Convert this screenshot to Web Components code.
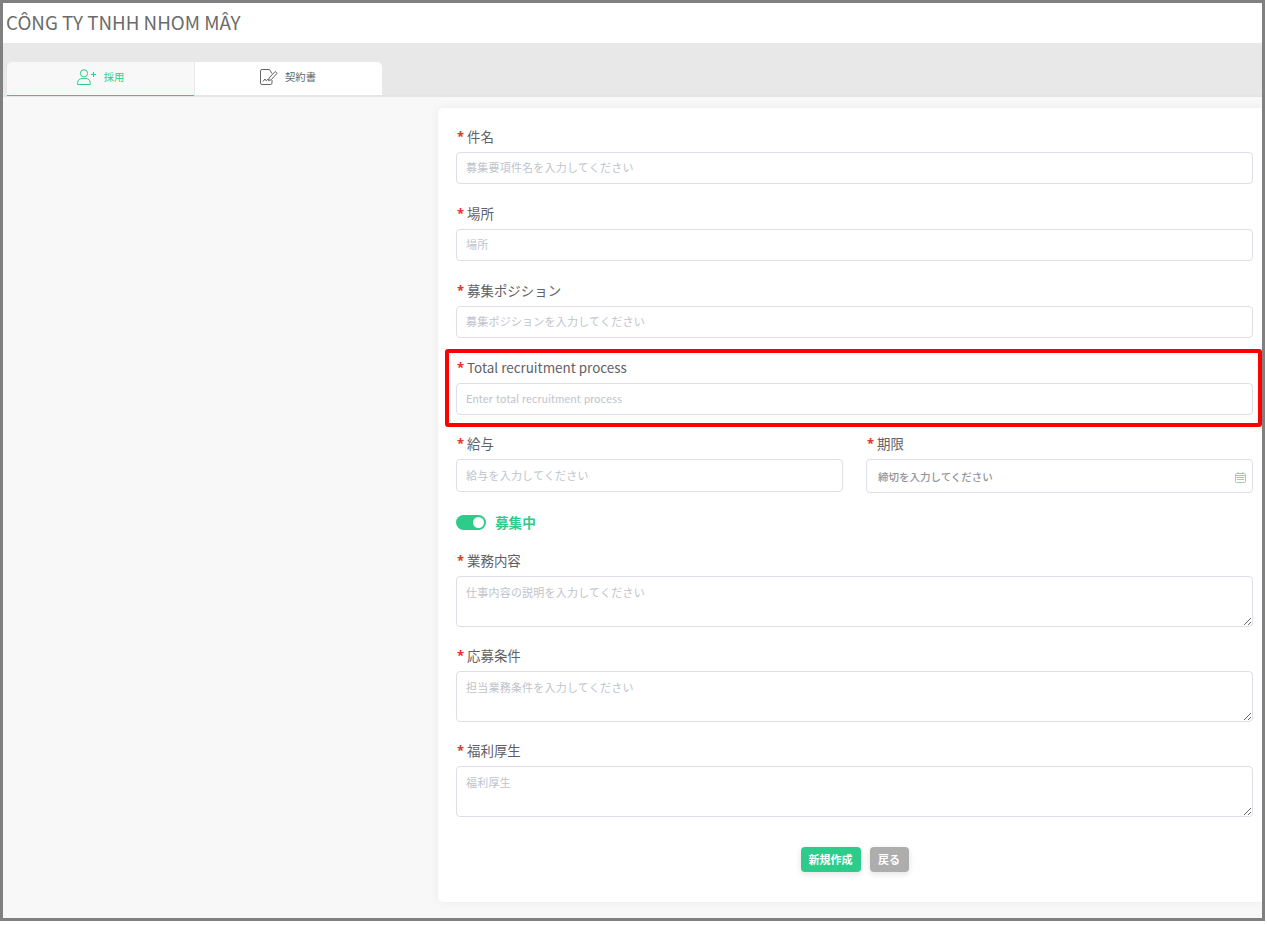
<!doctype html>
<html lang="ja"><head><meta charset="utf-8"><title>採用</title>
<style>
html,body{margin:0;padding:0;background:#fff}
body{font-family:"Noto Sans CJK JP","Noto Sans",sans-serif;color:#606266}
</style></head><body>
<app-shell>
  <app-header slot="header">CÔNG TY TNHH NHOM MÂY</app-header>
  <tab-bar slot="tabs">
    <tab-item active icon="add">採用</tab-item>
    <tab-item icon="sign">契約書</tab-item>
  </tab-bar>
  <form-card slot="main">
    <form-field label="件名" placeholder="募集要項件名を入力してください"></form-field>
    <form-field label="場所" placeholder="場所"></form-field>
    <form-field label="募集ポジション" placeholder="募集ポジションを入力してください"></form-field>
    <form-field label="Total recruitment process" placeholder="Enter total recruitment process" highlight></form-field>
    <field-row>
      <form-field label="給与" placeholder="給与を入力してください" type="tall"></form-field>
      <form-field label="期限" placeholder="締切を入力してください" type="date"></form-field>
    </field-row>
    <toggle-switch>募集中</toggle-switch>
    <form-field label="業務内容" placeholder="仕事内容の説明を入力してください" type="area"></form-field>
    <form-field label="応募条件" placeholder="担当業務条件を入力してください" type="area"></form-field>
    <form-field label="福利厚生" placeholder="福利厚生" type="area"></form-field>
    <form-actions>
      <action-button>新規作成</action-button>
      <action-button kind="back">戻る</action-button>
    </form-actions>
  </form-card>
</app-shell>
<script>
function def(name, css, html){
  customElements.define(name, class extends HTMLElement{
    constructor(){super();const r=this.attachShadow({mode:'open'});
      r.innerHTML='<style>'+css+'</style>'+(typeof html==='function'?html(this):html);}
  });
}
def('app-shell',`
:host{display:block;width:1265px;height:921px;box-sizing:border-box;border:3px solid #808080;background:#f8f8f8;overflow:hidden}
.w{display:flex;flex-direction:column;height:100%}
main{flex:1;display:flex;justify-content:flex-end;padding-top:11px;min-height:0}
`,`<div class="w"><slot name="header"></slot><slot name="tabs"></slot><main><slot name="main"></slot></main></div>`);
def('app-header',`
:host{display:block;height:40px;box-sizing:border-box;background:#fff;padding:6px 0 0 3px;font:400 18.8px/26px "Noto Sans CJK JP","Noto Sans",sans-serif;color:#6b6b6b;white-space:nowrap}
`,`<slot></slot>`);
def('tab-bar',`
:host{display:block;height:54px;box-sizing:border-box;background:#e8e8e9;padding-top:19px}
.w{height:35px;box-sizing:border-box;border-bottom:2px solid #e4e4ea;padding-left:4px}
.l{display:flex;align-items:flex-start;gap:1px;width:375px;height:34px;border-radius:5px 5px 0 0;overflow:hidden}
`,`<div class="w"><div class="l"><slot></slot></div></div>`);
const icons={
 add:`<svg width="19" height="16" viewBox="0 0 19 16" fill="none" stroke="currentColor" stroke-width="1"><circle cx="7" cy="4.300" r="3.600"/><path d="M.6 15.500v-1.800C.6 11 2.800 9.600 5 9.600h4c2.200 0 4.200 1.400 4.200 4.100v1.800z"/><path d="M14 5.500h5M16.500 3v5"/></svg>`,
 sign:`<svg width="18" height="16" viewBox="0 0 18 16" fill="none" stroke="currentColor" stroke-width="1"><path d="M9.500 .5H2A1.500 1.500 0 0 0 .5 2v12A1.500 1.500 0 0 0 2 15.500h8.500a1.500 1.500 0 0 0 1.500-1.500v-3"/><path d="M9.500 .5L12 4.500"/><path d="M3 12.500l2-2.500 1.200 1.800 1.600-1.600 1 1.300"/><path d="M8.500 11.500l.6-2.500 6-6.500 2 1.800-6 6.500z"/></svg>`
};
def('tab-item',`
:host{display:flex;width:187px;height:33px;box-sizing:border-box;align-items:center;justify-content:center;gap:7px;background:#fff;color:#666;font:400 10.3px/1 "Noto Sans CJK JP",sans-serif;padding:0 1px 3px 0}
:host([active]){height:34px;gap:8px;padding:0 0 3px;background:#f8f8f8;color:#2ecc8a;border-bottom:1px solid #3cc48a}
.i{display:flex}
`,h=>`<span class="i">${icons[h.getAttribute('icon')]||''}</span><slot></slot>`);
def('form-card',`
:host{display:block;width:824px;height:794px;box-sizing:border-box;background:#fff;border-radius:5px 0 0 5px;padding:18px 9px 0 18px;box-shadow:0 0 10px rgba(0,0,0,.06)}
`,`<slot></slot>`);
def('form-field',`
:host{display:block;position:relative;margin-bottom:19px;flex:1;min-width:0}
:host([highlight]),:host([type=area]){margin-bottom:18px}
:host([type=tall]),:host([type=date]){margin-bottom:0}
label{display:block;height:19px;margin-bottom:7px;font:400 13.45px/20px "Noto Sans CJK JP","Noto Sans",sans-serif;color:#5f6166;white-space:nowrap}
b{color:#e8322a;font:700 13px/19px "Noto Sans",sans-serif;margin:0 0 0 1px;position:relative;top:-1px}
.box{position:relative;display:block}
input,textarea{display:block;width:100%;box-sizing:border-box;border:1px solid #dcdfe6;border-radius:4px;background:#fff;outline:0;padding:0 9px 2px;color:#606266;font:400 11px/1.4 Lato,"Noto Sans CJK JP",sans-serif;letter-spacing:.22px;margin:0}
input{height:32px}
textarea{height:51px;padding-top:8px;resize:vertical}
::placeholder{color:#c0c4cc;opacity:1}
:host([type=tall]) input{height:33px;padding-bottom:1px}
:host([type=date]) input{padding:1px 11px 0;height:34px;font-size:10.5px;letter-spacing:0}
:host([type=date]) input::placeholder{color:#8f939b;font-weight:500}
.cal{position:absolute;right:7px;top:13px;display:flex;color:#9bd0ac}
.mark{position:absolute;left:-11px;right:-9px;top:-8px;bottom:-12px;border:4px solid #f00;border-radius:3px;pointer-events:none}
`,h=>{
  const t=h.getAttribute('type'),p=h.getAttribute('placeholder');
  const ctl=t==='area'?`<textarea placeholder="${p}"></textarea>`:`<input placeholder="${p}">`;
  const cal=t==='date'?`<span class="cal"><svg width="11" height="11" viewBox="0 0 11 11" fill="none" stroke="currentColor" stroke-width="1"><rect x=".5" y="1.500" width="10" height="9" rx="1"/><path d="M.5 3.500h10M3 0v2M8 0v2M2 5.500h7M2 7.500h7"/></svg></span>`:'';
  const mark=h.hasAttribute('highlight')?'<i class="mark"></i>':'';
  return `<label><b>*</b> ${h.getAttribute('label')}</label><span class="box">${ctl}${cal}</span>${mark}`;
});
def('field-row',`:host{display:flex;gap:23px}`,`<slot></slot>`);
def('toggle-switch',`
:host{display:flex;align-items:center;gap:9px;height:18px;margin:20px 0 19px;font:700 13.6px/17px "Noto Sans CJK JP",sans-serif;color:#2ecc8a}
.t{width:30px;height:15px;border-radius:8px;background:#2ecc8a;position:relative;flex:none}
.t::after{content:"";position:absolute;right:2px;top:2px;width:11px;height:11px;border-radius:50%;background:#fff}
`,`<span class="t"></span><slot></slot>`);
def('form-actions',`:host{display:flex;justify-content:center;gap:9px;padding-top:12px}`,`<slot></slot>`);
def('action-button',`
:host{display:flex;align-items:center;justify-content:center;height:25px;padding:0 8px;border-radius:4px;background:#2ecc8a;color:#fff;font:700 11px/1 "Noto Sans CJK JP",sans-serif;box-shadow:0 2px 6px rgba(0,0,0,.12)}
:host([kind=back]){background:#adadad;padding:0 8.500px}
`,`<slot></slot>`);
</script>
</body></html>
